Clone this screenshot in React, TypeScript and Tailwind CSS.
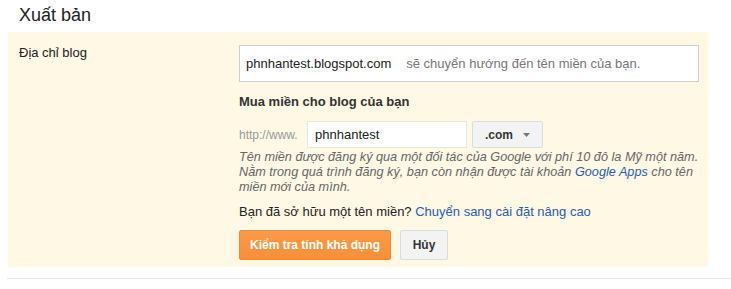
export default function App() {
  return (
    <div className="w-[731px] h-[289px] bg-white font-['Liberation_Sans',Arial,sans-serif] text-[13px] text-[#222]">
      {/* Title */}
      <h2 className="pl-[19px] pt-[4px] h-[32px] text-[18px] leading-[22px] text-[#222]">Xuất bản</h2>

      {/* Domain panel */}
      <div className="ml-[8px] w-[700px] h-[235px] bg-[#fef8e5] flex">
        <div className="w-[231px] pl-[11px] pt-[13px] leading-[16px]">Địa chỉ blog</div>
        <div className="flex flex-col pt-[13px]">
          <div className="w-[460px] h-[37px] border border-[#cfcfcf] bg-white flex items-center pl-[6px] text-[13px]">
            <span className="text-[#222]">phnhantest.blogspot.com</span>
            <span className="ml-[15px] text-[#777]">sẽ chuyển hướng đến tên miền của bạn.</span>
          </div>

          <div className="mt-[12px] font-bold text-[#333] leading-[16px]">Mua miền cho blog của bạn</div>

          <div className="mt-[11px] flex items-center">
            <span className="w-[68px] text-[12px] text-[#999]">http://www.</span>
            <div className="w-[160px] h-[27px] bg-white border border-[#e6e6e6] flex items-center pl-[7px] text-[13px] text-[#222]">
              phnhantest
            </div>
            <div className="ml-[5px] w-[71px] h-[27px] bg-[#f3f3f3] border border-[#dcdcdc] rounded-[2px] flex items-center justify-center gap-[10px]">
              <span className="font-bold text-[12px] text-[#333]">.com</span>
              <svg width="7" height="4" viewBox="0 0 7 4">
                <path d="M0 0h7L3.5 4z" fill="#777" />
              </svg>
            </div>
          </div>

          <p className="mt-[2px] w-[462px] italic text-[12.7px] leading-[15px] text-[#666]">
            Tên miền được đăng ký qua một đối tác của Google với phí 10 đô la Mỹ một năm.
            <br />
            Nằm trong quá trình đăng ký, bạn còn nhận được tài khoản{" "}
            <span className="text-[#2a5db0]">Google Apps</span> cho tên miền mới của mình.
          </p>

          <div className="mt-[9px] leading-[16px]">
            Bạn đã sở hữu một tên miền? <span className="text-[#2a5db0]">Chuyển sang cài đặt nâng cao</span>
          </div>

          <div className="mt-[10px] flex gap-[9px]">
            <button className="w-[152px] h-[30px] rounded-[2px] bg-gradient-to-b from-[#fb9a48] to-[#f88f38] border border-[#f28a34] text-white font-bold text-[12px]">
              Kiểm tra tính khả dụng
            </button>
            <button className="w-[48px] h-[30px] rounded-[2px] bg-[#f3f3f3] border border-[#dcdcdc] text-[#333] font-bold text-[12px]">
              Hủy
            </button>
          </div>
        </div>
      </div>

      <div className="mt-[11px] ml-[7px] h-px bg-[#e5e5e5]" />
    </div>
  );
}
